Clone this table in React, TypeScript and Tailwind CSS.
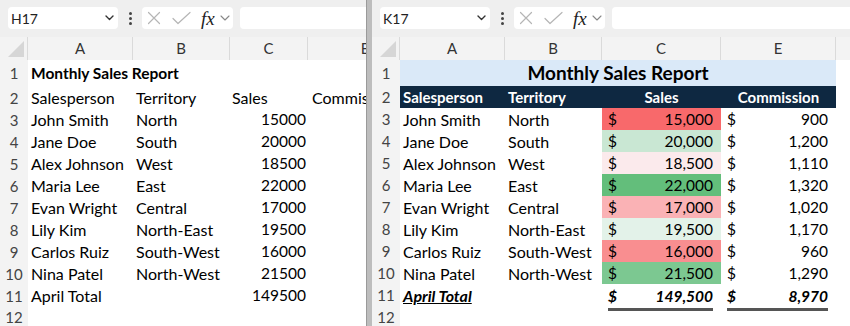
import React from "react";

type Row = {
  name: string;
  territory: string;
  sales: number;
  commission: number;
  fill: string;
};

const rows: Row[] = [
  { name: "John Smith", territory: "North", sales: 15000, commission: 900, fill: "bg-[#f8696b]" },
  { name: "Jane Doe", territory: "South", sales: 20000, commission: 1200, fill: "bg-[#c9e7d3]" },
  { name: "Alex Johnson", territory: "West", sales: 18500, commission: 1110, fill: "bg-[#fbeaec]" },
  { name: "Maria Lee", territory: "East", sales: 22000, commission: 1320, fill: "bg-[#63be7b]" },
  { name: "Evan Wright", territory: "Central", sales: 17000, commission: 1020, fill: "bg-[#fab2b5]" },
  { name: "Lily Kim", territory: "North-East", sales: 19500, commission: 1170, fill: "bg-[#e3f2e9]" },
  { name: "Carlos Ruiz", territory: "South-West", sales: 16000, commission: 960, fill: "bg-[#f98e90]" },
  { name: "Nina Patel", territory: "North-West", sales: 21500, commission: 1290, fill: "bg-[#7cc891]" },
];

const fmt = (n: number) => n.toLocaleString("en-US");

// barre d'outils (zone de nom + formule)
const Toolbar: React.FC<{ cell: string }> = ({ cell }) => (
  <div className="flex h-[37px] items-center bg-[#efefef] pb-[1px] pl-[8px]">
    <div className="flex h-[22px] w-[110px] items-center justify-between rounded-[4px] bg-white pl-[3px] pr-[4px]">
      <span className="text-[14px] text-[#222]">{cell}</span>
      <svg width="9" height="6" viewBox="0 0 9 6" fill="none">
        <path d="M1 1l3.5 3.5L8 1" stroke="#333" strokeWidth="1.4" strokeLinecap="round" strokeLinejoin="round" />
      </svg>
    </div>
    <div className="flex w-[24px] flex-col items-center gap-[2px]">
      <span className="h-[3px] w-[3px] rounded-full bg-[#444]" />
      <span className="h-[3px] w-[3px] rounded-full bg-[#444]" />
      <span className="h-[3px] w-[3px] rounded-full bg-[#444]" />
    </div>
    <div className="flex h-[22px] w-[91px] items-center rounded-[4px] bg-white pl-[5px]">
      <svg width="14" height="14" viewBox="0 0 14 14" fill="none">
        <path d="M1.5 1.5l11 11M12.5 1.5l-11 11" stroke="#b5b5b5" strokeWidth="1.2" strokeLinecap="round" />
      </svg>
      <svg className="ml-[11px]" width="19" height="14" viewBox="0 0 19 14" fill="none">
        <path d="M1 7.5l5 5L18 1.5" stroke="#b5b5b5" strokeWidth="1.2" strokeLinecap="round" strokeLinejoin="round" />
      </svg>
      <span className="ml-[10px] font-['Liberation_Serif'] text-[19px] italic leading-none text-[#222]">fx</span>
      <svg className="ml-[5px]" width="10" height="6" viewBox="0 0 10 6" fill="none">
        <path d="M1 1l4 4 4-4" stroke="#888" strokeWidth="1.1" strokeLinecap="round" strokeLinejoin="round" />
      </svg>
    </div>
    <div className="ml-[7px] h-[22px] flex-1 rounded-l-[4px] bg-white" />
  </div>
);

const ColHeaders: React.FC<{ cols: { label: string; w: string }[] }> = ({ cols }) => (
  <div className="flex h-[23px] bg-[#f3f3f3] text-[15px] text-[#333]">
    <div className="relative w-[28px] shrink-0 border-r border-[#dadada]">
      <div className="absolute bottom-[3px] right-[3px] h-0 w-0 border-b-[16px] border-l-[16px] border-b-[#d6d6d6] border-l-transparent" />
    </div>
    {cols.map((c) => (
      <div key={c.label + c.w} className={`${c.w} flex shrink-0 items-center justify-center border-r border-[#dadada]`}>
        {c.label}
      </div>
    ))}
  </div>
);

const RowNum: React.FC<{ n: number }> = ({ n }) => (
  <div className="flex w-[28px] shrink-0 items-center justify-center bg-[#f3f3f3] pt-[1px] text-[15px] text-[#444]">{n}</div>
);

const LeftPane: React.FC = () => (
  <div className="w-[366px] shrink-0 overflow-hidden bg-white">
    <Toolbar cell="H17" />
    <ColHeaders
      cols={[
        { label: "A", w: "w-[105px]" },
        { label: "B", w: "w-[97px]" },
        { label: "C", w: "w-[78px]" },
        { label: "E", w: "w-[115px]" },
      ]}
    />
    <div className="text-[16px] text-black">
      <div className="flex h-[26px]">
        <RowNum n={1} />
        <div className="flex w-[105px] shrink-0 items-center whitespace-nowrap pl-[3px] pt-[2px] text-[15.5px] font-bold">
          Monthly Sales Report
        </div>
      </div>
      <div className="flex h-[22px] items-center pt-[1px]">
        <RowNum n={2} />
        <div className="w-[105px] shrink-0 pl-[3px]">Salesperson</div>
        <div className="w-[97px] shrink-0 pl-[3px]">Territory</div>
        <div className="w-[78px] shrink-0 pl-[2px]">Sales</div>
        <div className="w-[115px] shrink-0 whitespace-nowrap pl-[4px]">Commission</div>
      </div>
      {rows.map((r, i) => (
        <div key={r.name} className="flex h-[22px] items-center pt-[1px]">
          <RowNum n={i + 3} />
          <div className="w-[105px] shrink-0 pl-[3px]">{r.name}</div>
          <div className="w-[97px] shrink-0 pl-[3px]">{r.territory}</div>
          <div className="w-[78px] shrink-0 pr-[2px] text-right text-[15.5px]">{r.sales}</div>
        </div>
      ))}
      <div className="flex h-[22px] items-center pt-[1px]">
        <RowNum n={11} />
        <div className="w-[105px] shrink-0 pl-[3px]">April Total</div>
        <div className="w-[97px] shrink-0" />
        <div className="w-[78px] shrink-0 pr-[2px] text-right text-[15.5px]">149500</div>
      </div>
      <div className="flex h-[22px] items-center">
        <RowNum n={12} />
      </div>
    </div>
  </div>
);

const Money: React.FC<{ v: string; total?: boolean }> = ({ v, total }) =>
  total ? (
    <div className="ml-[6px] mr-[8px] flex h-[27px] items-center justify-between self-stretch border-b-[3px] border-[#555] pt-[1px] font-bold italic">
      <span>$</span>
      <span>{v}</span>
    </div>
  ) : (
    <div className="flex h-full items-center justify-between pl-[6px] pr-[8px] pt-[1px]">
      <span>$</span>
      <span>{v}</span>
    </div>
  );

const RightPane: React.FC = () => (
  <div className="flex-1 overflow-hidden bg-white">
    <Toolbar cell="K17" />
    <ColHeaders
      cols={[
        { label: "A", w: "w-[105px]" },
        { label: "B", w: "w-[97px]" },
        { label: "C", w: "w-[119px]" },
        { label: "E", w: "w-[115px]" },
        { label: "", w: "w-[40px]" },
      ]}
    />
    <div className="text-[16px] text-black">
      <div className="flex h-[26px]">
        <RowNum n={1} />
        <div className="flex w-[436px] shrink-0 items-center justify-center bg-[#dae9f8] text-[19px] font-bold">
          Monthly Sales Report
        </div>
      </div>
      <div className="flex h-[22px]">
        <RowNum n={2} />
        <div className="flex w-[436px] shrink-0 items-center bg-[#0e2841] pt-[1px] text-[15px] font-bold text-white">
          <div className="w-[105px] shrink-0 pl-[3px]">Salesperson</div>
          <div className="w-[97px] shrink-0 pl-[3px]">Territory</div>
          <div className="w-[119px] shrink-0 text-center">Sales</div>
          <div className="w-[115px] shrink-0 text-center">Commission</div>
        </div>
      </div>
      {rows.map((r, i) => (
        <div key={r.name} className="flex h-[22px]">
          <RowNum n={i + 3} />
          <div className="flex w-[105px] shrink-0 items-center pl-[3px] pt-[1px]">{r.name}</div>
          <div className="flex w-[97px] shrink-0 items-center pl-[3px] pt-[1px]">{r.territory}</div>
          <div className={`w-[119px] shrink-0 text-[15.5px] ${r.fill}`}>
            <Money v={fmt(r.sales)} />
          </div>
          <div className="w-[115px] shrink-0 text-[15.5px]">
            <Money v={fmt(r.commission)} />
          </div>
        </div>
      ))}
      <div className="flex h-[22px]">
        <RowNum n={11} />
        <div className="flex w-[105px] shrink-0 items-center pl-[3px] pt-[1px] text-[16px] font-bold italic underline">
          April Total
        </div>
        <div className="w-[97px] shrink-0" />
        <div className="flex w-[119px] shrink-0 flex-col text-[15.5px]">
          <Money v="149,500" total />
        </div>
        <div className="flex w-[115px] shrink-0 flex-col text-[15.5px]">
          <Money v="8,970" total />
        </div>
      </div>
      <div className="flex h-[22px]">
        <RowNum n={12} />
      </div>
    </div>
  </div>
);

export default function App() {
  return (
    <div className="flex h-[326px] w-[850px] overflow-hidden bg-white font-['Lato',sans-serif]">
      <LeftPane />
      <div className="w-[6px] shrink-0 border-l border-[#9a9a9a] bg-[#bdbdbd]" />
      <RightPane />
    </div>
  );
}
